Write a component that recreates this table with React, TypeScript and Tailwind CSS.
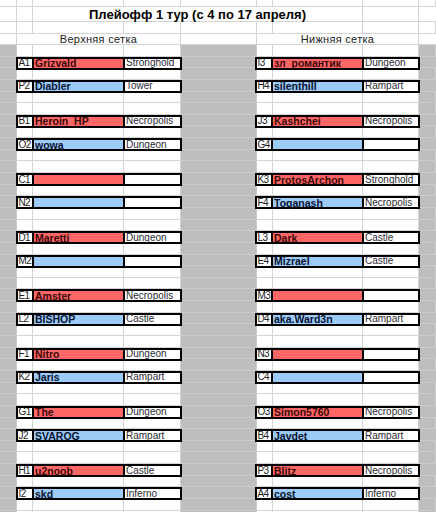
type Match = { id: string; name: string; race: string }

const cols = ['w-[17px]', 'w-[16px]', 'w-[91px]', 'w-[57px]', 'w-[76px]', 'w-[16px]', 'w-[90px]', 'w-[56px]', 'w-[17px]']
const grayCols = [0, 4, 8]

const left: [Match, Match][] = [
  [{ id: 'A1', name: 'Grizvald', race: 'Stronghold' }, { id: 'P2', name: 'Diabler', race: 'Tower' }],
  [{ id: 'B1', name: 'Heroin_HP', race: 'Necropolis' }, { id: 'O2', name: 'wowa', race: 'Dungeon' }],
  [{ id: 'C1', name: '', race: '' }, { id: 'N2', name: '', race: '' }],
  [{ id: 'D1', name: 'Maretti', race: 'Dungeon' }, { id: 'M2', name: '', race: '' }],
  [{ id: 'E1', name: 'Amster', race: 'Necropolis' }, { id: 'L2', name: 'BISHOP', race: 'Castle' }],
  [{ id: 'F1', name: 'Nitro', race: 'Dungeon' }, { id: 'K2', name: 'Jaris', race: 'Rampart' }],
  [{ id: 'G1', name: 'The', race: 'Dungeon' }, { id: 'J2', name: 'SVAROG', race: 'Rampart' }],
  [{ id: 'H1', name: 'u2noob', race: 'Castle' }, { id: 'I2', name: 'skd', race: 'Inferno' }],
]

const right: [Match, Match][] = [
  [{ id: 'I3', name: 'зл_романтик', race: 'Dungeon' }, { id: 'H4', name: 'silenthill', race: 'Rampart' }],
  [{ id: 'J3', name: 'Kashchei', race: 'Necropolis' }, { id: 'G4', name: '', race: '' }],
  [{ id: 'K3', name: 'ProtosArchon', race: 'Stronghold' }, { id: 'F4', name: 'Toganash', race: 'Necropolis' }],
  [{ id: 'L3', name: 'Dark', race: 'Castle' }, { id: 'E4', name: 'Mizrael', race: 'Castle' }],
  [{ id: 'M3', name: '', race: '' }, { id: 'D4', name: 'aka.Ward3n', race: 'Rampart' }],
  [{ id: 'N3', name: '', race: '' }, { id: 'C4', name: '', race: '' }],
  [{ id: 'O3', name: 'Simon5760', race: 'Necropolis' }, { id: 'B4', name: 'Javdet', race: 'Rampart' }],
  [{ id: 'P3', name: 'Blitz', race: 'Necropolis' }, { id: 'A4', name: 'cost', race: 'Inferno' }],
]

function Gray({ w }: { w: string }) {
  return <div className={`${w} shrink-0 h-full bg-[#bebebe] border-b border-[#cbcbcb]`} />
}

function GridRow({ h }: { h: string }) {
  return (
    <div className={`flex ${h}`}>
      {cols.map((w, i) => (
        <div key={i} className={`${w} shrink-0 h-full border-r border-b border-[#d4d4d4] bg-white`} />
      ))}
    </div>
  )
}

function BlankRow() {
  return (
    <div className="flex h-[11.65px]">
      {cols.map((w, i) =>
        grayCols.includes(i) ? (
          <div key={i} className={`${w} shrink-0 h-full bg-[#bebebe] border-r border-b border-[#cbcbcb]`} />
        ) : (
          <div key={i} className={`${w} shrink-0 h-full bg-white border-r border-b border-[#d4d4d4]`} />
        )
      )}
    </div>
  )
}

function Box({ m, red, side }: { m: Match; red: boolean; side: 'l' | 'r' }) {
  const fill = red ? 'bg-[#ff6666] text-[#3a0808]' : 'bg-[#9dcbf8] text-[#081230]'
  return (
    <div
      className={`relative z-10 flex h-[13px] shrink-0 border-2 border-black leading-[8px] ${
        side === 'l' ? 'w-[166px]' : 'w-[165px]'
      }`}
    >
      <div className="w-[16px] shrink-0 border-r-2 border-black bg-white pl-[0.5px] pt-[0.5px] text-[10px] tracking-[-0.6px] text-[#222] whitespace-nowrap overflow-x-hidden">
        {m.id}
      </div>
      <div className={`w-[91px] shrink-0 border-r-2 border-black pl-[1px] pt-[0.5px] text-[10.5px] font-bold whitespace-nowrap ${fill}`}>
        {m.name}
      </div>
      <div className="flex-1 bg-white pl-[1px] pt-[0.5px] text-[10px] text-[#2a2a33] whitespace-nowrap">{m.race}</div>
    </div>
  )
}

function MatchRow({ l, r, red }: { l: Match; r: Match; red: boolean }) {
  return (
    <div className="flex h-[11.65px]">
      <Gray w="w-[16px]" />
      <Box m={l} red={red} side="l" />
      <Gray w="w-[73px]" />
      <Box m={r} red={red} side="r" />
      <Gray w="w-[16px]" />
    </div>
  )
}

export default function App() {
  const rows = []
  for (let i = 0; i < 41; i++) {
    const k = (i - 1) % 5
    const g = Math.floor((i - 1) / 5)
    if (i >= 1 && g < 8 && k === 0) rows.push(<MatchRow key={i} l={left[g][0]} r={right[g][0]} red />)
    else if (i >= 1 && g < 8 && k === 2) rows.push(<MatchRow key={i} l={left[g][1]} r={right[g][1]} red={false} />)
    else rows.push(<BlankRow key={i} />)
  }

  return (
    <div className="w-[436px] h-[512px] overflow-hidden bg-white font-['Liberation_Sans',Arial,sans-serif] text-black">
      <GridRow h="h-[7px]" />
      <div className="flex h-[15px]">
        <div className="w-[17px] shrink-0 border-r border-b border-[#d4d4d4]" />
        <div className="w-[16px] shrink-0 border-r border-b border-[#d4d4d4]" />
        <div className="w-[330px] shrink-0 border-r border-b border-[#d4d4d4] flex items-center justify-center text-[13px] font-bold leading-none">
          Плейофф 1 тур (с 4 по 17 апреля)
        </div>
        <div className="w-[56px] shrink-0 border-r border-b border-[#d4d4d4]" />
        <div className="w-[17px] shrink-0 border-b border-[#d4d4d4]" />
      </div>
      <GridRow h="h-[12px]" />
      <div className="flex h-[11px] text-[11px] leading-none text-[#222]">
        <div className="w-[17px] shrink-0 border-r border-b border-[#d4d4d4]" />
        <div className="w-[164px] shrink-0 border-r border-b border-[#d4d4d4] flex items-center justify-center tracking-[0.3px]">
          Верхняя сетка
        </div>
        <div className="w-[76px] shrink-0 border-r border-b border-[#d4d4d4]" />
        <div className="w-[162px] shrink-0 border-r border-b border-[#d4d4d4] flex items-center justify-center tracking-[0.3px]">
          Нижняя сетка
        </div>
        <div className="w-[17px] shrink-0 border-b border-[#d4d4d4]" />
      </div>
      {rows}
    </div>
  )
}
